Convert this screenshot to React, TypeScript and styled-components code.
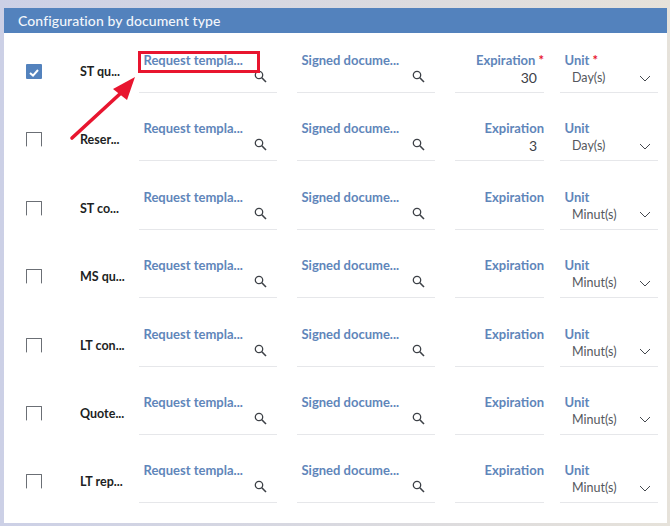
import React from "react";
import styled, { createGlobalStyle } from "styled-components";

const Global = createGlobalStyle`
  html, body {
    margin: 0;
    padding: 0;
    background: #e0e0e2;
  }
  body {
    font-family: "Lato", "Liberation Sans", sans-serif;
  }
`;

interface DocRow {
  name: string;
  checked?: boolean;
  required?: boolean;
  expiration?: string;
  unit: string;
}

const rows: DocRow[] = [
  { name: "ST qu...", checked: true, required: true, expiration: "30", unit: "Day(s)" },
  { name: "Reser...", expiration: "3", unit: "Day(s)" },
  { name: "ST co...", unit: "Minut(s)" },
  { name: "MS qu...", unit: "Minut(s)" },
  { name: "LT con...", unit: "Minut(s)" },
  { name: "Quote...", unit: "Minut(s)" },
  { name: "LT rep...", unit: "Minut(s)" },
];

const SearchIcon = () => (
  <svg width="13" height="13" viewBox="0 0 13 13" fill="none" stroke="#3d4147" strokeWidth="1.3">
    <circle cx="5" cy="5" r="3.7" />
    <path d="M7.8 7.8 12 12" strokeWidth="1.6" />
  </svg>
);

const ChevronIcon = () => (
  <svg width="12" height="7" viewBox="0 0 12 7" fill="none" stroke="#44484e" strokeWidth="1">
    <path d="M1 1l5 5 5-5" />
  </svg>
);

const LookupField = ({ label }: { label: string }) => (
  <Field>
    <FieldLabel>{label}</FieldLabel>
    <LookupValue>
      <SearchIcon />
    </LookupValue>
  </Field>
);

export default function App() {
  return (
    <Page>
      <Global />
      <Card>
        <Header>Configuration by document type</Header>
        <Rows>
          {rows.map((row) => (
            <Row key={row.name}>
              <CheckCell>
                <Check $checked={row.checked}>
                  {row.checked && (
                    <svg width="16" height="15" viewBox="0 0 16 15" fill="none" stroke="#fff" strokeWidth="2">
                      <path d="M4 8l3 2.6L12 5" />
                    </svg>
                  )}
                </Check>
              </CheckCell>
              <Name>{row.name}</Name>
              <LookupField label="Request templa..." />
              <LookupField label="Signed docume..." />
              <ExpirationField>
                <FieldLabel>
                  Expiration{row.required && <Star> *</Star>}
                </FieldLabel>
                <ExpirationValue>{row.expiration}</ExpirationValue>
              </ExpirationField>
              <UnitField>
                <FieldLabel>
                  Unit{row.required && <Star> *</Star>}
                </FieldLabel>
                <UnitValue>
                  {row.unit}
                  <ChevronIcon />
                </UnitValue>
              </UnitField>
            </Row>
          ))}
        </Rows>
        <Annotation>
          <svg width="140" height="100" viewBox="0 0 140 100" fill="none">
            <path d="M4 92 54 46" stroke="#e8152f" strokeWidth="3.6" strokeLinecap="round" />
            <path d="M67 31 45 43l14 11z" fill="#e8152f" />
          </svg>
        </Annotation>
        <Highlight />
      </Card>
    </Page>
  );
}

const Page = styled.div`
  width: 670px;
  height: 526px;
  padding: 8px 3px 3px 4px;
  box-sizing: border-box;
  overflow: hidden;
  background: linear-gradient(90deg, #ccd0e6, #e6e2da);
`;

const Card = styled.div`
  position: relative;
  height: 515px;
  background: #fff;
`;

const Header = styled.div`
  height: 25px;
  line-height: 25px;
  padding-left: 14px;
  background: #5382bd;
  color: #f2f6fb;
  font-size: 14px;
  font-weight: 500;
  letter-spacing: 0.1px;
`;

const Rows = styled.div`
  display: flex;
  flex-direction: column;
  padding-top: 19px;
`;

const Row = styled.div`
  display: grid;
  grid-template-columns: 54px 81px 158px 158px 105px 98px;
  height: 68.4px;
  align-items: start;
`;

const CheckCell = styled.div`
  padding: 12px 0 0 22px;
`;

const Check = styled.div<{ $checked?: boolean }>`
  width: 16px;
  height: 15px;
  box-sizing: border-box;
  border-radius: 1px;
  background: ${(p) => (p.$checked ? "#5382bd" : "transparent")};
  border: ${(p) => (p.$checked ? "none" : "1.4px solid #6b6f75")};
  border-bottom-color: transparent;
`;

const Name = styled.div`
  padding: 12px 0 0 22px;
  font-size: 12.5px;
  font-weight: 700;
  line-height: 16px;
  color: #1d1f24;
`;

const Field = styled.div`
  display: flex;
  flex-direction: column;
  height: 40px;
  margin-right: 20px;
  border-bottom: 1px solid #e6e7ea;
`;

const FieldLabel = styled.div`
  padding-left: 4.5px;
  font-size: 13px;
  font-weight: 700;
  line-height: 16px;
  color: #5f86ba;
  white-space: nowrap;
`;

const LookupValue = styled.div`
  display: flex;
  justify-content: flex-end;
  padding: 2px 10px 0 0;
`;

const Star = styled.span`
  color: #e8152f;
`;

const ExpirationField = styled(Field)`
  margin-right: 16px;
  text-align: right;
`;

const ExpirationValue = styled.div`
  font-size: 14px;
  line-height: 16px;
  padding-right: 7px;
  margin-top: 2px;
  color: #3d4147;
`;

const UnitField = styled(Field)`
  margin-right: 0;
`;

const UnitValue = styled.div`
  display: flex;
  justify-content: space-between;
  align-items: center;
  padding: 2px 7px 0 12px;
  font-size: 12.5px;
  line-height: 16px;
  color: #55585e;
`;

const Annotation = styled.div`
  position: absolute;
  left: 64px;
  top: 38px;
  line-height: 0;
`;

const Highlight = styled.div`
  position: absolute;
  left: 134px;
  top: 43px;
  width: 122px;
  height: 22px;
  box-sizing: border-box;
  border: 3px solid #e8152f;
`;
